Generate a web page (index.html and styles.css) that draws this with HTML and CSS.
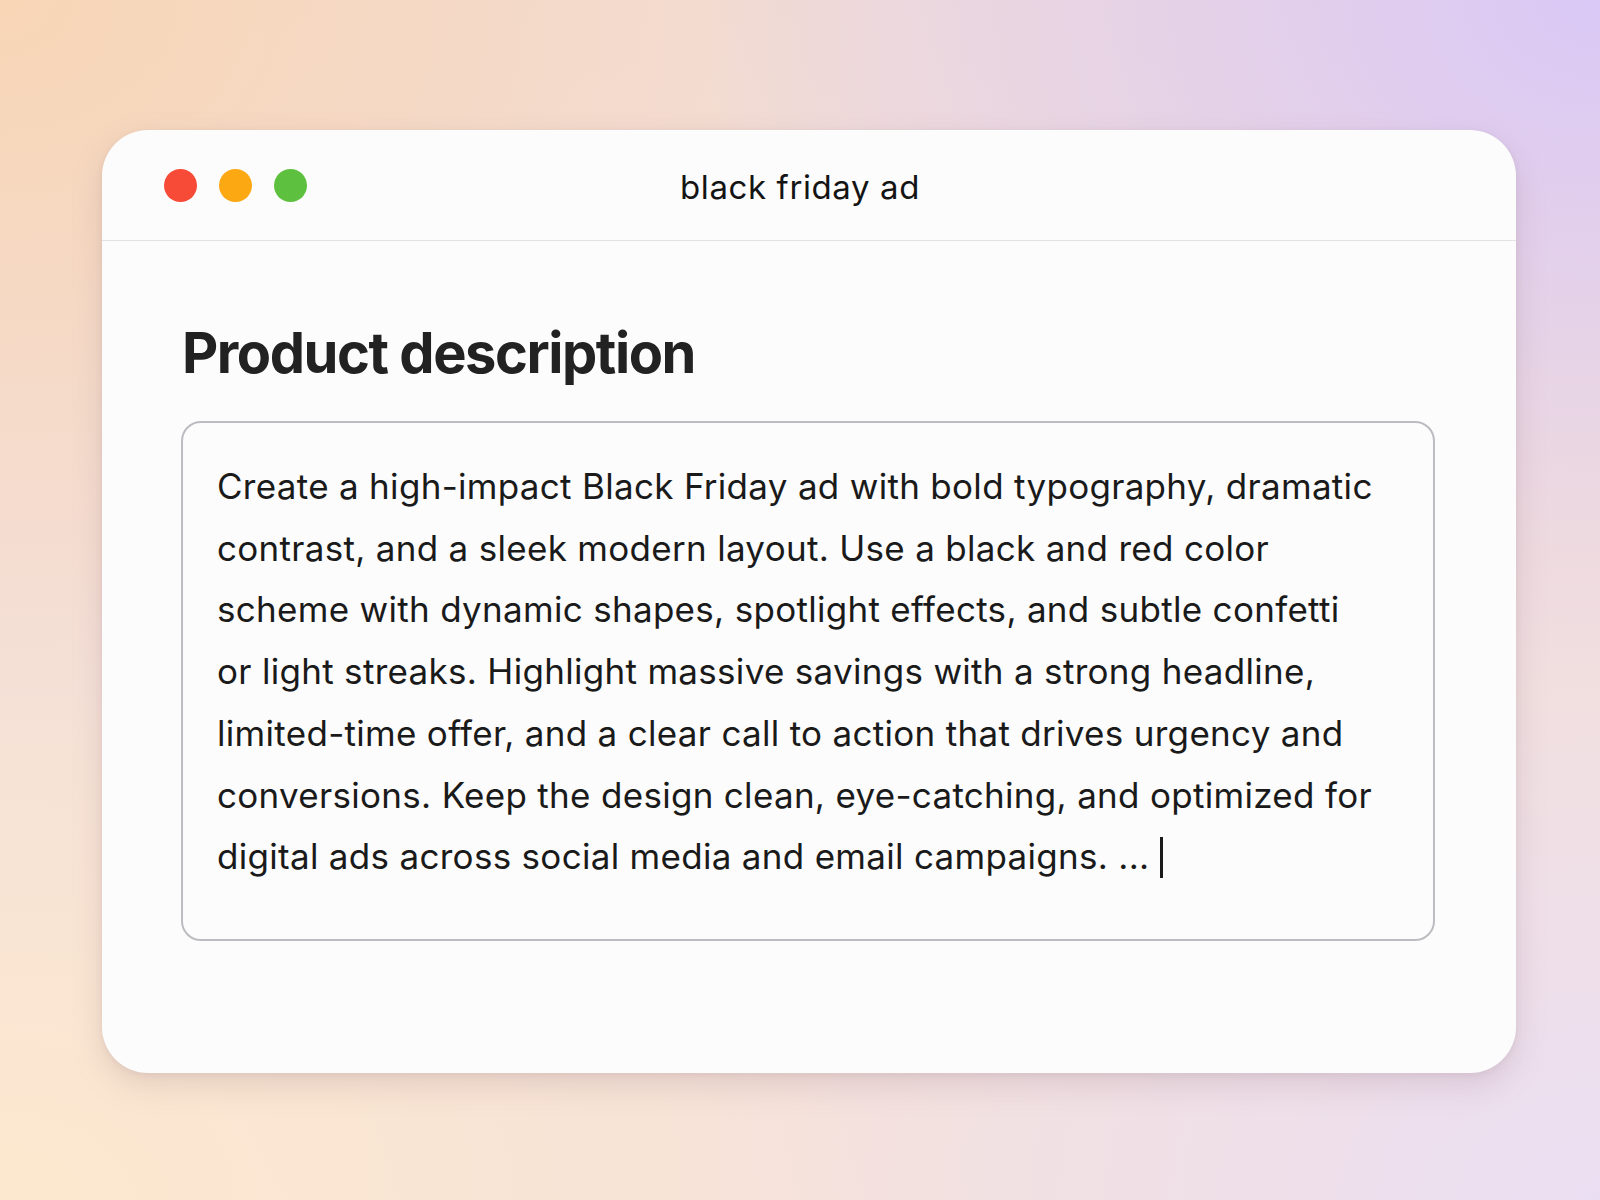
FILE: index.html
```html
<!DOCTYPE html>
<html lang="en">
<head>
<meta charset="utf-8">
<title>black friday ad</title>
<link rel="stylesheet" href="styles.css">
</head>
<body>
<div class="page">
  <div class="window">
    <div class="titlebar">
      <div class="dots">
        <span class="dot red"></span>
        <span class="dot yellow"></span>
        <span class="dot green"></span>
      </div>
      <div class="title">black friday ad</div>
      <div class="spacer"></div>
    </div>
    <div class="content">
      <h1 class="heading">Product description</h1>
      <div class="textbox">
        <p class="prompt">Create a high-impact Black Friday ad with bold typography, dramatic<br>contrast, and a sleek modern layout. Use a black and red color<br>scheme with dynamic shapes, spotlight effects, and subtle confetti<br>or light streaks. Highlight massive savings with a strong headline,<br>limited-time offer, and a clear call to action that drives urgency and<br>conversions. Keep the design clean, eye-catching, and optimized for<br>digital ads across social media and email campaigns. ... <span class="caret"></span></p>
      </div>
    </div>
  </div>
</div>
</body>
</html>
```

FILE: styles.css
```css
html, body {
  margin: 0;
  padding: 0;
}
body {
  width: 1600px;
  height: 1200px;
  overflow: hidden;
  font-family: Inter, "Open Sans", sans-serif;
  background:
    radial-gradient(ellipse 900px 700px at 100% 0%, rgba(218, 200, 246, 1) 0%, rgba(218, 200, 246, 0) 100%),
    radial-gradient(ellipse 900px 700px at 0% 0%, rgba(248, 214, 182, 1) 0%, rgba(248, 214, 182, 0) 100%),
    radial-gradient(ellipse 900px 700px at 100% 100%, rgba(234, 222, 242, 1) 0%, rgba(234, 222, 242, 0) 100%),
    radial-gradient(ellipse 900px 600px at 0% 100%, rgba(252, 232, 206, 1) 0%, rgba(252, 232, 206, 0) 100%),
    linear-gradient(180deg, #f1dcd6 0%, #f6e2da 100%);
}
.page {
  padding: 130px 0 0 102px;
}
.window {
  width: 1414px;
  height: 943px;
  box-sizing: border-box;
  background: #fcfcfc;
  border-radius: 46px;
  box-shadow: 0 12px 30px rgba(150, 120, 130, 0.22), 0 2px 6px rgba(150, 120, 130, 0.12);
  overflow: hidden;
}
.titlebar {
  height: 110px;
  border-bottom: 1px solid #e3e3e6;
  display: grid;
  grid-template-columns: 1fr auto 1fr;
  align-items: center;
  padding: 0 80px 0 62px;
}
.dots {
  display: flex;
  gap: 22px;
  align-items: center;
}
.dot {
  width: 33px;
  height: 33px;
  border-radius: 50%;
  display: block;
}
.red { background: #f84b37; }
.yellow { background: #fca812; }
.green { background: #5ec03f; }
.title {
  font-size: 33px;
  color: #141414;
  letter-spacing: 0.6px;
  padding-top: 4px;
}
.content {
  padding: 80px 81px 0 79px;
}
.heading {
  margin: 0 0 36px 1px;
  font-size: 56px;
  line-height: 64px;
  font-weight: 700;
  color: #222222;
  letter-spacing: -1.45px;
}
.textbox {
  border: 2px solid #bdbdc1;
  border-radius: 20px;
  height: 520px;
  box-sizing: border-box;
  padding: 33px 20px 0 34px;
}
.prompt {
  margin: 0;
  font-size: 35px;
  line-height: 61.7px;
  color: #1a1a1a;
  letter-spacing: 0.3px;
  white-space: nowrap;
}
.caret {
  display: inline-block;
  width: 3px;
  height: 41px;
  background: #1a1a1a;
  vertical-align: -9px;
}
```
